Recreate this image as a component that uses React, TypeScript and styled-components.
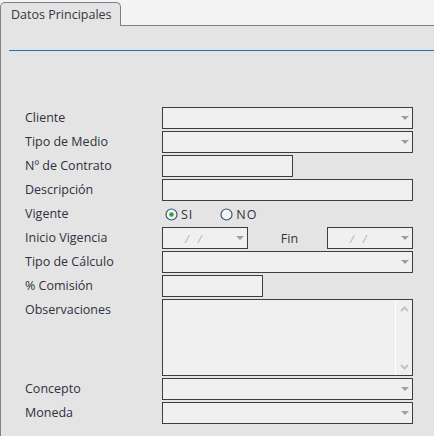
import React from "react";
import styled, { createGlobalStyle } from "styled-components";

const GlobalStyle = createGlobalStyle`
  html, body {
    margin: 0;
    padding: 0;
    background: #f4f4f4;
    font-family: "Open Sans", "Liberation Sans", sans-serif;
  }
`;

const Page = styled.div`
  width: 434px;
  height: 436px;
  display: flex;
  flex-direction: column;
  overflow: hidden;
`;

const TabBar = styled.div`
  height: 25px;
  display: flex;
  align-items: flex-end;
  border-bottom: 1px solid #7b8189;
  box-sizing: content-box;
`;

const Tab = styled.div`
  width: 121px;
  height: 24px;
  margin-bottom: -1px;
  border: 1px solid #7b8189;
  border-bottom: none;
  border-radius: 5px 5px 0 0;
  background: #e4e4e4;
  box-sizing: border-box;
  padding-left: 10px;
  font-size: 12.5px;
  line-height: 24px;
  color: #333640;
`;

const Panel = styled.div`
  flex: 1;
  background: #e4e4e4;
  border-left: 1px solid #7b8189;
  padding-top: 24px;
`;

const Rule = styled.div`
  margin-left: 8px;
  height: 1px;
  background: #1a72c0;
`;

const Form = styled.div`
  margin-top: 56px;
  padding-left: 24px;
  display: grid;
  grid-template-columns: 137px 251px;
  row-gap: 2px;
`;

const Label = styled.div`
  font-size: 12.5px;
  line-height: 22px;
  color: #2f3140;
  white-space: nowrap;
`;

const Box = styled.div<{ $w?: number; $h?: number }>`
  width: ${p => (p.$w ? `${p.$w}px` : "100%")};
  height: ${p => p.$h ?? 22}px;
  border: 1px solid #3d3d3d;
  background: #f0f0f0;
  box-sizing: border-box;
  position: relative;
  display: flex;
  align-items: center;
`;

const Caret = styled.span`
  position: absolute;
  right: 3px;
  top: 8px;
  width: 0;
  height: 0;
  border-left: 4px solid transparent;
  border-right: 4px solid transparent;
  border-top: 4px solid #a0a0a0;
`;

const DateText = styled.span`
  margin-left: 22px;
  font-size: 11px;
  font-style: italic;
  color: #a9b0c8;
  letter-spacing: 3px;
  white-space: pre;
`;

const RadioRow = styled.div`
  display: flex;
  align-items: center;
  height: 22px;
  padding-left: 3px;
  gap: 27px;
`;

const Radio = styled.label`
  display: flex;
  align-items: center;
  gap: 3px;
  font-size: 12.5px;
  color: #2f3140;
  letter-spacing: 1px;
`;

const DateRow = styled.div`
  display: flex;
  align-items: center;
  justify-content: space-between;
`;

const Fin = styled.span`
  font-size: 12.5px;
  color: #2f3140;
  margin-left: 4px;
`;

const ScrollTrack = styled.div`
  position: absolute;
  right: 0;
  top: 0;
  bottom: 0;
  width: 17px;
  border-left: 1px solid #ffffff;
  display: flex;
  flex-direction: column;
  justify-content: space-between;
  align-items: center;
  padding: 6px 0 5px;
  box-sizing: border-box;
`;

const Combo = () => (
  <Box>
    <Caret />
  </Box>
);

const DateBox = () => (
  <Box $w={86}>
    <DateText>/ /</DateText>
    <Caret />
  </Box>
);

const RadioDot: React.FC<{ checked?: boolean }> = ({ checked }) => (
  <svg width="13" height="13" viewBox="0 0 13 13">
    <circle cx="6.5" cy="6.5" r="5.5" fill="#f2f4f6" stroke="#3c5470" strokeWidth="1.2" />
    {checked && <circle cx="6.5" cy="6.5" r="2.2" fill="#2ea043" />}
  </svg>
);

const Chevron: React.FC<{ up?: boolean }> = ({ up }) => (
  <svg width="9" height="6" viewBox="0 0 9 6">
    <path
      d={up ? "M1 5 L4.5 1.5 L8 5" : "M1 1 L4.5 4.5 L8 1"}
      fill="none"
      stroke="#c4c4c4"
      strokeWidth="2"
    />
  </svg>
);

export default function App() {
  return (
    <Page>
      <GlobalStyle />
      <TabBar>
        <Tab>Datos Principales</Tab>
      </TabBar>
      <Panel>
        <Rule />
        <Form>
          <Label>Cliente</Label>
          <Combo />
          <Label>Tipo de Medio</Label>
          <Combo />
          <Label>Nº de Contrato</Label>
          <Box $w={131} />
          <Label>Descripción</Label>
          <Box />
          <Label>Vigente</Label>
          <RadioRow>
            <Radio>
              <RadioDot checked />
              SI
            </Radio>
            <Radio>
              <RadioDot />
              NO
            </Radio>
          </RadioRow>
          <Label>Inicio Vigencia</Label>
          <DateRow>
            <DateBox />
            <Fin>Fin</Fin>
            <DateBox />
          </DateRow>
          <Label>Tipo de Cálculo</Label>
          <Combo />
          <Label>% Comisión</Label>
          <Box $w={101} />
          <Label>Observaciones</Label>
          <Box $h={77}>
            <ScrollTrack>
              <Chevron up />
              <Chevron />
            </ScrollTrack>
          </Box>
          <Label>Concepto</Label>
          <Combo />
          <Label>Moneda</Label>
          <Combo />
        </Form>
      </Panel>
    </Page>
  );
}
